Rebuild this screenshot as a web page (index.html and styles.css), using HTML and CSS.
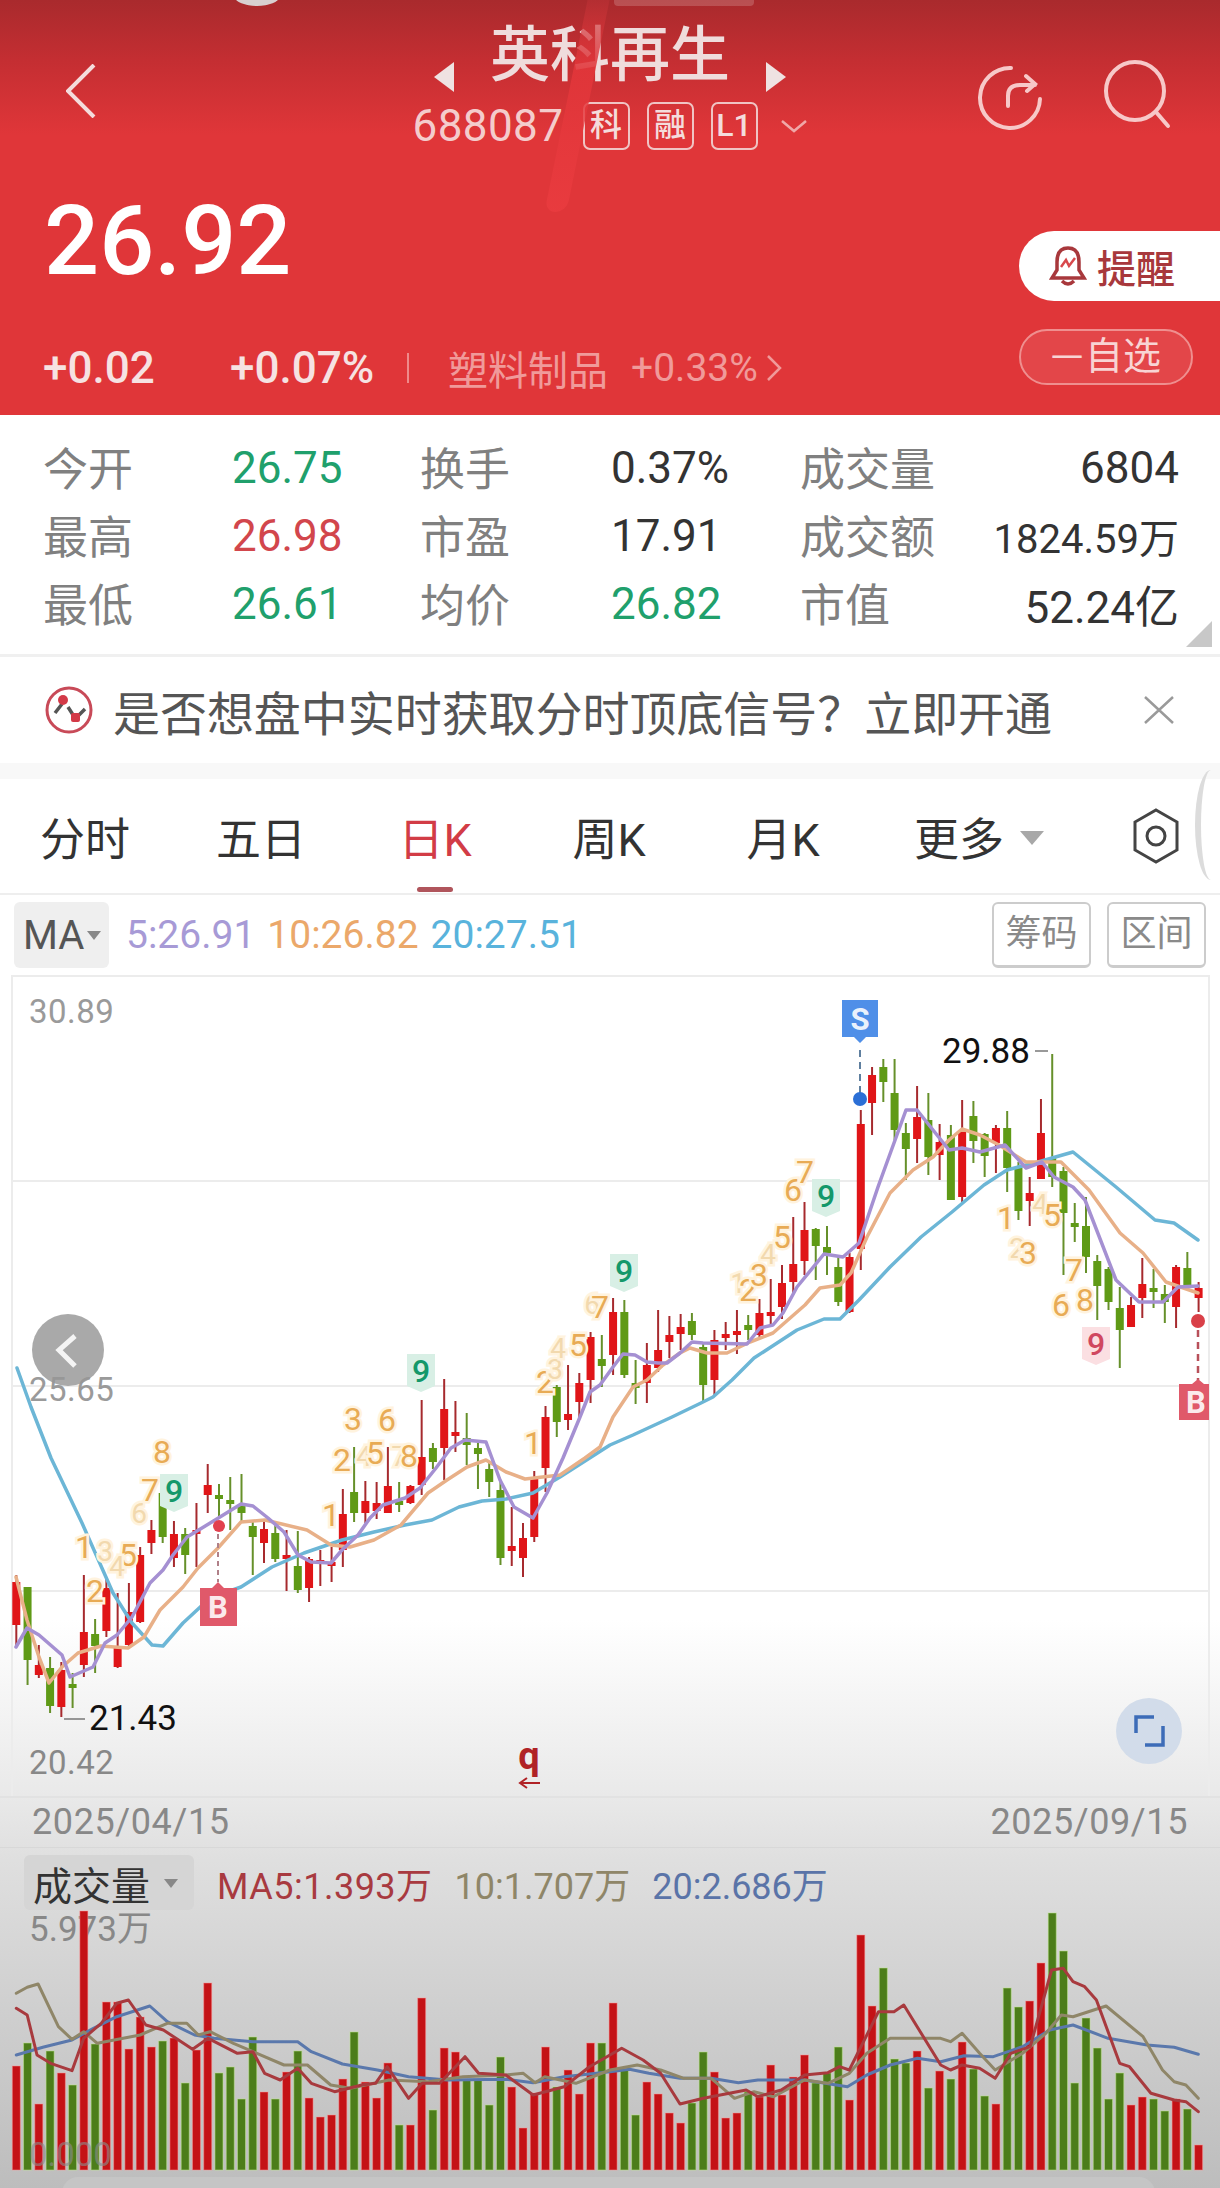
FILE: index.html
```html
<!DOCTYPE html>
<html lang="zh-CN">
<head>
    <meta charset="UTF-8">
    <meta name="viewport" content="width=device-width, initial-scale=1.0">
    <title>英科再生 688087</title>
    <link rel="stylesheet" href="styles.css">
</head>
<body>
    <div class="header">
        <div class="top-mark"></div>
        <div class="top-pill"></div>
        <div class="streak"></div>

        <div class="nav">
            <svg class="back-icon" width="30" height="54" viewBox="0 0 30 54"><path d="M28 1 L2 27 L28 53"/></svg>
            <div class="stock-title">
                <div class="title-row">
                    <span class="arrow-left"></span>
                    <span class="stock-name">英科再生</span>
                    <span class="arrow-right"></span>
                </div>
                <div class="code-row">
                    <span class="stock-code">688087</span>
                    <span class="code-tag">科</span>
                    <span class="code-tag">融</span>
                    <span class="code-tag">L1</span>
                    <svg class="code-chevron" width="28" height="14" viewBox="0 0 28 14"><path d="M2 2 L14 12 L26 2"/></svg>
                </div>
            </div>
            <div class="nav-icons">
                <svg width="80" height="80" viewBox="0 0 80 80"><path d="M41 10 A30 30 0 1 0 70 41"/><path d="M38 48 V38 Q38 27 50 27 H65 M56 18 L65 26 L57 33"/></svg>
                <svg width="80" height="80" viewBox="0 0 80 80"><circle cx="36" cy="33" r="29"/><path d="M57 54 L69 68"/></svg>
            </div>
        </div>

        <div class="quote">
            <div class="quote-left">
                <div class="price">26.92</div>
                <div class="change-row">
                    <span class="change-abs">+0.02</span>
                    <span class="change-pct">+0.07%</span>
                    <span class="change-divider"></span>
                    <span class="sector">塑料制品</span>
                    <span class="sector-pct">+0.33%</span>
                    <svg class="sector-chevron" width="16" height="28" viewBox="0 0 16 28"><path d="M2 2 L14 14 L2 26"/></svg>
                </div>
            </div>
            <div class="quote-right">
                <div class="remind-btn">
                    <svg width="38" height="42" viewBox="0 0 38 42"><path d="M19 3 C10 3 8 10 8 17 V25 L3 33 H35 L30 25 V17 C30 10 28 3 19 3 Z"/><path d="M13 36 Q19 42 25 36"/><path class="bell-mark" d="M12 22 L17 15 L20 21 L26 13"/></svg>
                    <span>提醒</span>
                </div>
                <div class="watch-btn"><span class="watch-minus">一</span>自选</div>
            </div>
        </div>
    </div>

    <div class="stats">
        <span class="stat-label">今开</span><span class="stat-value green">26.75</span>
        <span class="stat-label">换手</span><span class="stat-value">0.37%</span>
        <span class="stat-label">成交量</span><span class="stat-value end">6804</span>
        <span class="stat-label">最高</span><span class="stat-value red">26.98</span>
        <span class="stat-label">市盈</span><span class="stat-value">17.91</span>
        <span class="stat-label">成交额</span><span class="stat-value end small">1824.59万</span>
        <span class="stat-label">最低</span><span class="stat-value green">26.61</span>
        <span class="stat-label">均价</span><span class="stat-value green">26.82</span>
        <span class="stat-label">市值</span><span class="stat-value end">52.24亿</span>
        <div class="stats-corner"></div>
    </div>

    <div class="notice">
        <svg width="48" height="48" viewBox="0 0 48 48"><circle class="notice-ring" cx="24" cy="24" r="22"/><path class="notice-line" d="M10 27 L17 18 M23 21 L30 32 M33 30 L40 23"/><circle class="notice-dot" cx="18" cy="14" r="5"/><rect class="notice-dot" x="26" y="27" width="9" height="9" rx="2"/></svg>
        <span class="notice-text">是否想盘中实时获取分时顶底信号？立即开通</span>
        <svg class="notice-close" width="32" height="28" viewBox="0 0 32 28"><path d="M2 1 L30 27 M30 1 L2 27"/></svg>
    </div>
    <div class="strip"></div>

    <div class="tabs">
        <div class="tab">分时</div>
        <div class="tab">五日</div>
        <div class="tab active">日K</div>
        <div class="tab">周K</div>
        <div class="tab">月K</div>
        <div class="tab tab-more">更多<span class="tab-caret"></span></div>
        <svg class="tab-settings" width="50" height="58" viewBox="0 0 50 58"><path d="M25 3 L46 15 V43 L25 55 L4 43 V15 Z"/><circle cx="25" cy="29" r="9"/></svg>
        <div class="edge-pill"></div>
    </div>

    <div class="ma-row">
        <div class="ma-btn">MA<span class="ma-caret"></span></div>
        <span class="ma-value ma5">5:26.91</span>
        <span class="ma-value ma10">10:26.82</span>
        <span class="ma-value ma20">20:27.51</span>
        <div class="ma-actions">
            <div class="ma-action">筹码</div>
            <div class="ma-action">区间</div>
        </div>
    </div>

    <svg id="price-chart" class="price-chart" width="1220" height="821" viewBox="0 975 1220 821"></svg>

    <div class="dates">
        <span>2025/04/15</span>
        <span>2025/09/15</span>
    </div>

    <div class="vol-head">
        <div class="vol-btn">成交量<span class="vol-caret"></span></div>
        <span class="vol-ma vol5">MA5:1.393万</span>
        <span class="vol-ma vol10">10:1.707万</span>
        <span class="vol-ma vol20">20:2.686万</span>
    </div>

    <svg id="vol-chart" class="vol-chart" width="1220" height="262" viewBox="0 1910 1220 262"></svg>

    <div class="bottom-bar"></div>

    <script src="chart.js"></script>
</body>
</html>
```

FILE: styles.css
```css
* {
    margin: 0;
    padding: 0;
    box-sizing: border-box;
}

body {
    width: 1220px;
    height: 2188px;
    overflow: hidden;
    font-family: 'Roboto', 'Noto Sans CJK SC', sans-serif;
    color: #333;
    background: linear-gradient(to bottom, #fff 0, #fff 1620px, #e9e9e9 1796px, #dfdfdf 1860px, #d0d0d0 2000px, #bdbdbd 2188px);
}

svg {
    display: block;
    flex: none;
}

/* red quote header */
.header {
    position: relative;
    height: 415px;
    padding-top: 24px;
    background: linear-gradient(to bottom, #a92a2d 0, #c42e32 60px, #e03639 135px, #e03639 100%);
    color: #f3dede;
    box-shadow: 0 3px 0 #d8d8d8;
}

.top-mark {
    position: absolute;
    left: 235px;
    top: -12px;
    width: 44px;
    height: 18px;
    border-radius: 50%;
    background: #d8d0d0;
}

.top-pill {
    position: absolute;
    left: 614px;
    top: 0;
    width: 140px;
    height: 6px;
    border-radius: 0 0 4px 4px;
    background: rgba(255, 255, 255, 0.18);
}

.streak {
    position: absolute;
    left: 566px;
    top: 0;
    width: 22px;
    height: 212px;
    border-radius: 0 0 12px 12px;
    transform: skewX(-11.5deg);
    background: linear-gradient(to bottom, rgba(190, 50, 54, 0.5), rgba(226, 54, 58, 0.9) 70px, rgba(238, 62, 66, 0.6));
    z-index: 2;
}

.nav {
    display: grid;
    grid-template-columns: 1fr auto 1fr;
    align-items: center;
}

.back-icon {
    margin-left: 66px;
    margin-top: 8px;
}

.back-icon path {
    fill: none;
    stroke: #f4dcdc;
    stroke-width: 4;
}

.stock-title {
    display: flex;
    flex-direction: column;
    align-items: center;
}

.title-row {
    display: flex;
    align-items: center;
    gap: 36px;
    height: 64px;
}

.stock-name {
    font-size: 60px;
    line-height: 64px;
    font-weight: 500;
    color: #efdcdc;
}

.arrow-left,
.arrow-right {
    width: 0;
    height: 0;
    margin-top: 42px;
    border-top: 15px solid transparent;
    border-bottom: 15px solid transparent;
}

.arrow-left {
    border-right: 20px solid #efe2e2;
}

.arrow-right {
    border-left: 20px solid #efe2e2;
}

.code-row {
    display: flex;
    align-items: center;
    height: 48px;
    margin-top: 14px;
    color: #f4cccc;
}

.stock-code {
    width: 170px;
    font-size: 44px;
    letter-spacing: 0.4px;
}

.code-tag {
    width: 47px;
    height: 48px;
    margin-right: 17px;
    border: 2px solid #f0c4c4;
    border-radius: 7px;
    font-size: 32px;
    font-weight: 500;
    line-height: 42px;
    text-align: center;
    color: #f4dcdc;
}

.code-chevron {
    margin-left: 5px;
}

.code-chevron path {
    fill: none;
    stroke: #f0a8a8;
    stroke-width: 2.5;
}

.nav-icons {
    display: flex;
    justify-content: flex-end;
    gap: 49px;
    padding-right: 41px;
    padding-top: 22px;
}

.nav-icons svg path,
.nav-icons svg circle {
    fill: none;
    stroke: #f7c8c8;
    stroke-width: 4;
    stroke-linecap: round;
}

.quote {
    display: flex;
    justify-content: space-between;
    margin-top: 41px;
    padding-left: 43px;
}

.price {
    margin-left: 1px;
    font-size: 97px;
    line-height: 100px;
    font-weight: 500;
    color: #fff;
}

.change-row {
    display: flex;
    align-items: center;
    height: 50px;
    margin-top: 52px;
}

.change-abs {
    width: 187px;
    font-size: 44px;
    font-weight: 500;
    color: #f6e2e2;
}

.change-pct {
    font-size: 44px;
    font-weight: 500;
    color: #f6e2e2;
}

.change-divider {
    width: 2px;
    height: 30px;
    margin: 0 39px 0 33px;
    background: #ef8a8a;
}

.sector {
    font-size: 40px;
    color: #f09a9a;
}

.sector-pct {
    margin-left: 23px;
    font-size: 39px;
    color: #f09a9a;
}

.sector-chevron {
    margin-left: 8px;
}

.sector-chevron path {
    fill: none;
    stroke: #f09a9a;
    stroke-width: 2.5;
}

.quote-right {
    display: flex;
    flex-direction: column;
    align-items: flex-end;
    padding-top: 40px;
}

.remind-btn {
    display: flex;
    align-items: center;
    gap: 10px;
    width: 201px;
    height: 70px;
    padding-left: 30px;
    border-radius: 35px 0 0 35px;
    background: #fff;
    font-size: 39px;
    font-weight: 500;
    color: #a8383c;
}

.remind-btn svg path {
    fill: none;
    stroke: #a8383c;
    stroke-width: 3.5;
}

.remind-btn svg .bell-mark {
    stroke: #d8484c;
    stroke-width: 2.5;
}

.watch-btn {
    width: 174px;
    height: 56px;
    margin-top: 28px;
    margin-right: 27px;
    border: 2px solid #ef8f8f;
    border-radius: 28px;
    background: #e34649;
    font-size: 38px;
    line-height: 50px;
    color: #f8d4d4;
    text-align: center;
}

.watch-minus {
    font-size: 32px;
    margin-right: 2px;
}

/* stats table */
.stats {
    position: relative;
    display: grid;
    grid-template-columns: 189px 188px 191px 189px 146px 233px;
    grid-auto-rows: 68px;
    align-items: center;
    height: 242px;
    padding: 17px 0 0 43px;
    border-bottom: 3px solid #f0f0f0;
    background: #fff;
}

.stat-label {
    font-size: 45px;
    color: #808080;
    white-space: nowrap;
}

.stat-value {
    padding-top: 3px;
    font-size: 44px;
    color: #333;
}

.stat-value.green {
    color: #20a06c;
}

.stat-value.red {
    color: #d2464c;
}

.stat-value.end {
    text-align: right;
    white-space: nowrap;
}

.stat-value.small {
    font-size: 40px;
}

.stats-corner {
    position: absolute;
    right: 8px;
    bottom: 7px;
    width: 26px;
    height: 26px;
    background: #c8c8c8;
    clip-path: polygon(100% 0, 100% 100%, 0 100%);
}

/* signal notice */
.notice {
    display: flex;
    align-items: center;
    height: 106px;
    padding: 0 45px;
    background: #fff;
}

.notice-ring {
    fill: none;
    stroke: #c84a58;
    stroke-width: 3;
}

.notice-line {
    fill: none;
    stroke: #555;
    stroke-width: 3.5;
}

.notice-dot {
    fill: #d33a48;
}

.notice-text {
    margin-left: 20px;
    font-size: 47px;
    color: #555;
    white-space: nowrap;
    letter-spacing: -0.05px;
}

.notice-close {
    margin-left: auto;
}

.notice-close path {
    fill: none;
    stroke: #9a9a9a;
    stroke-width: 2.5;
}

.strip {
    height: 16px;
    background: #f8f8f8;
}

/* period tabs */
.tabs {
    position: relative;
    display: flex;
    align-items: center;
    height: 116px;
    border-bottom: 2px solid #eee;
    background: #fff;
}

.tab {
    position: relative;
    display: flex;
    align-items: center;
    justify-content: center;
    width: 174px;
    height: 100%;
    font-size: 45px;
    color: #333;
}

.tab:first-child {
    padding-right: 4px;
}

.tab.active {
    color: #d23c46;
}

.tab.active::after {
    content: '';
    position: absolute;
    left: 69px;
    bottom: 1px;
    width: 36px;
    height: 5px;
    border-radius: 3px;
    background: #b0555c;
}

.tab-more {
    justify-content: flex-start;
    padding-left: 44px;
}

.tab-caret {
    width: 0;
    height: 0;
    margin: 4px 0 0 16px;
    border-left: 12px solid transparent;
    border-right: 12px solid transparent;
    border-top: 14px solid #a8a8a8;
}

.tab-settings {
    margin-left: 87px;
}

.tab-settings path,
.tab-settings circle {
    fill: none;
    stroke: #444;
    stroke-width: 3;
}

.edge-pill {
    position: absolute;
    right: 9px;
    top: -9px;
    width: 16px;
    height: 110px;
    border-left: 6px solid #dcdcdc;
    border-radius: 16px 0 0 16px / 55px 0 0 55px;
}

/* MA legend */
.ma-row {
    display: flex;
    align-items: center;
    gap: 12px;
    height: 80px;
    padding: 0 14px;
    background: #fff;
}

.ma-btn {
    display: flex;
    align-items: center;
    width: 95px;
    height: 66px;
    margin-right: 5px;
    padding-left: 9px;
    border-radius: 6px;
    background: #efefef;
    font-size: 40px;
    color: #555;
}

.ma-caret {
    width: 0;
    height: 0;
    margin-left: 3px;
    border-left: 7px solid transparent;
    border-right: 7px solid transparent;
    border-top: 9px solid #888;
}

.ma-value {
    font-size: 39px;
}

.ma5 {
    color: #a79ad6;
}

.ma10 {
    color: #eba86a;
}

.ma20 {
    color: #59b3dc;
}

.ma-actions {
    display: flex;
    gap: 16px;
    margin-left: auto;
}

.ma-action {
    width: 99px;
    height: 66px;
    border: 2px solid #ccc;
    border-bottom-width: 3px;
    border-radius: 6px;
    background: #fff;
    font-size: 36px;
    line-height: 60px;
    text-align: center;
    color: #8a8a8a;
}

/* charts */
.chart-line {
    stroke: #ececec;
    stroke-width: 2;
}

.axis-label {
    font-size: 33px;
    fill: #9a9a9a;
    letter-spacing: 0.5px;
}

.axis-label.dim {
    fill: #888;
}

.peak-label {
    font-size: 35px;
    fill: #111;
}

.peak-dash {
    stroke: #777;
    stroke-width: 1.5;
}

.seq {
    font-size: 32px;
    fill: #e8ab55;
    stroke: #fff3de;
    stroke-width: 5;
    paint-order: stroke;
    text-anchor: middle;
}

.seq.faded {
    fill: #f2d9ae;
    font-size: 28px;
}

.seq-nine {
    font-size: 32px;
    font-weight: 500;
    text-anchor: middle;
}

.signal-text {
    font-size: 31px;
    font-weight: 700;
    fill: #fff;
    fill-opacity: 0.9;
    text-anchor: middle;
}

.buy-mark {
    font-size: 38px;
    font-weight: 700;
    fill: #b02226;
    text-anchor: middle;
}

.dates {
    display: flex;
    justify-content: space-between;
    height: 52px;
    padding: 0 32px;
    border-top: 2px solid #e2e2e2;
    border-bottom: 1px solid #d8d8d8;
    font-size: 36px;
    line-height: 48px;
    letter-spacing: 0.6px;
    color: #888;
}

.vol-head {
    display: flex;
    align-items: center;
    gap: 22px;
    height: 62px;
    padding: 7px 0 0 24px;
}

.vol-btn {
    display: flex;
    align-items: center;
    width: 170px;
    height: 55px;
    margin-right: 1px;
    padding-left: 9px;
    border-radius: 6px;
    background: #d5d5d5;
    font-size: 39px;
    color: #333;
}

.vol-caret {
    width: 0;
    height: 0;
    margin: 2px 0 0 14px;
    border-left: 7px solid transparent;
    border-right: 7px solid transparent;
    border-top: 9px solid #888;
}

.vol-ma {
    font-size: 36px;
}

.vol5 {
    color: #a83a40;
    letter-spacing: 0.5px;
}

.vol10 {
    color: #8f8668;
}

.vol20 {
    color: #5a74a8;
}

.vol-label {
    font-size: 35px;
    fill: #888;
}

.vol-zero {
    font-size: 33px;
    fill: #8a8a8a;
    fill-opacity: 0.65;
}

.bottom-bar {
    height: 16px;
    margin: 5px 65px 0 62px;
    border-radius: 16px 16px 0 0;
    background: rgba(255, 255, 255, 0.12);
}
```

FILE: chart.js
```javascript
const SVG_NS = 'http://www.w3.org/2000/svg';

// Candle and bar slots
const SLOT_START = 16.3;
const SLOT_STEP = 11.26;
const slotX = i => SLOT_START + SLOT_STEP * i;

// type, high, body top, body bottom, low (page pixels)
const candles = [
    ['r',1575,1582,1625,1647],['g',1587,1587,1660,1685],['r',1645,1665,1675,1678],['g',1657,1668,1706,1713],
    ['r',1662,1670,1707,1717],['g',1673,1684,1686,1708],['r',1575,1632,1665,1677],['g',1619,1634,1646,1673],
    ['r',1577,1588,1631,1637],['r',1593,1648,1667,1668],['r',1583,1612,1645,1647],['r',1547,1555,1622,1623],
    ['r',1520,1530,1543,1554],['g',1480,1493,1537,1543],['r',1521,1534,1558,1567],['g',1528,1534,1555,1574],
    ['r',1503,1530,1533,1567],['r',1464,1485,1495,1513],['g',1484,1495,1497,1517],['g',1477,1500,1503,1530],
    ['g',1474,1505,1513,1522],['g',1522,1526,1537,1575],['r',1520,1529,1543,1563],['g',1523,1533,1559,1562],
    ['r',1530,1555,1557,1591],['g',1531,1566,1590,1593],['r',1557,1559,1588,1602],['r',1550,1560,1563,1586],
    ['r',1547,1562,1564,1582],['r',1489,1514,1550,1567],['g',1447,1492,1513,1522],['r',1481,1501,1513,1523],
    ['r',1482,1503,1511,1519],['r',1447,1486,1513,1513],['g',1482,1501,1503,1512],['r',1485,1486,1503,1504],
    ['r',1400,1457,1485,1495],['g',1443,1448,1462,1469],['r',1379,1409,1448,1480],['r',1401,1432,1435,1452],
    ['g',1413,1438,1445,1465],['g',1443,1448,1454,1489],['g',1462,1469,1482,1497],['g',1480,1490,1558,1565],
    ['r',1507,1546,1551,1566],['r',1523,1538,1558,1577],['r',1471,1477,1537,1542],['r',1406,1417,1468,1492],
    ['g',1385,1387,1422,1437],['r',1365,1414,1420,1430],['r',1373,1383,1402,1417],['r',1332,1337,1380,1403],
    ['g',1335,1359,1366,1387],['r',1298,1312,1355,1375],['g',1300,1312,1375,1378],['g',1360,1383,1388,1404],
    ['r',1343,1365,1383,1403],['r',1310,1350,1368,1372],['r',1316,1335,1342,1358],['r',1314,1327,1334,1350],
    ['g',1313,1321,1335,1340],['g',1342,1347,1385,1402],['r',1330,1340,1380,1395],['r',1322,1334,1338,1350],
    ['r',1310,1331,1333,1354],['g',1315,1325,1330,1340],['r',1299,1313,1335,1339],['r',1279,1312,1315,1326],
    ['r',1265,1283,1307,1319],['r',1217,1264,1282,1293],['r',1202,1230,1261,1275],['g',1228,1229,1246,1280],
    ['g',1226,1247,1253,1275],['g',1257,1267,1302,1306],['r',1253,1257,1312,1313],['r',1110,1124,1249,1270],
    ['r',1067,1075,1103,1135],['g',1059,1067,1082,1102],['g',1059,1093,1130,1140],['g',1123,1133,1149,1180],
    ['r',1086,1117,1139,1163],['g',1093,1120,1157,1175],['r',1124,1142,1155,1180],['g',1125,1135,1200,1200],
    ['r',1100,1132,1197,1202],['g',1101,1116,1141,1163],['g',1133,1134,1156,1177],['r',1125,1128,1143,1173],
    ['g',1111,1128,1168,1192],['g',1162,1168,1211,1220],['r',1177,1193,1201,1226],['r',1099,1133,1179,1179],
    ['g',1054,1158,1177,1187],['g',1167,1171,1213,1275],['g',1203,1223,1225,1242],['g',1197,1226,1257,1273],
    ['g',1255,1261,1286,1320],['g',1267,1269,1302,1310],['g',1287,1308,1330,1368],['r',1297,1305,1327,1327],
    ['r',1258,1284,1298,1318],['g',1269,1288,1291,1308],['g',1285,1294,1302,1323],['r',1265,1267,1307,1328],
    ['g',1252,1268,1285,1290],['r',1282,1288,1298,1312]
];

const ma5 = [[16,1647],[27,1628],[39,1635],[62,1655],[70,1677],[93,1667],[105,1643],[117,1635],[132,1617],[150,1583],
    [163,1570],[173,1555],[187,1537],[202,1528],[220,1517],[241,1504],[253,1506],[268,1518],[284,1532],[298,1555],
    [311,1562],[331,1563],[342,1550],[358,1535],[370,1518],[383,1505],[405,1498],[420,1488],[436,1468],[451,1448],
    [465,1440],[486,1442],[500,1480],[514,1507],[533,1518],[547,1493],[563,1458],[580,1417],[590,1392],[600,1385],
    [613,1367],[623,1354],[635,1355],[647,1362],[658,1363],[667,1363],[680,1353],[692,1342],[703,1343],[747,1344],
    [760,1328],[773,1325],[783,1313],[797,1287],[824,1254],[843,1257],[859,1243],[878,1187],[906,1110],[917,1110],
    [933,1130],[949,1150],[962,1148],[980,1152],[1005,1145],[1026,1168],[1042,1162],[1054,1177],[1073,1187],[1085,1200],
    [1116,1280],[1139,1302],[1163,1302],[1178,1287],[1198,1286]];

const ma10 = [[16,1577],[27,1620],[39,1657],[49,1683],[62,1667],[78,1653],[101,1646],[128,1648],[144,1637],[160,1610],
    [183,1587],[198,1568],[218,1548],[241,1522],[265,1520],[307,1530],[331,1545],[350,1547],[374,1540],[401,1525],
    [428,1493],[447,1480],[467,1467],[486,1460],[506,1472],[525,1479],[560,1475],[585,1458],[600,1447],[613,1417],
    [633,1387],[647,1380],[663,1365],[680,1353],[690,1348],[707,1353],[727,1353],[750,1342],[773,1333],[805,1305],
    [820,1288],[840,1285],[851,1273],[867,1237],[890,1193],[913,1170],[933,1157],[949,1140],[962,1129],[980,1135],
    [999,1145],[1026,1162],[1061,1162],[1089,1190],[1120,1233],[1143,1253],[1166,1282],[1198,1293]];

const ma20 = [[17,1368],[31,1407],[51,1458],[82,1523],[113,1593],[132,1623],[152,1645],[163,1646],[183,1623],[210,1598],
    [241,1587],[272,1567],[304,1553],[342,1540],[374,1532],[405,1525],[432,1520],[459,1507],[482,1501],[506,1499],
    [533,1493],[560,1477],[610,1445],[633,1435],[672,1417],[701,1403],[713,1397],[732,1380],[754,1358],[797,1330],
    [824,1319],[840,1319],[859,1300],[890,1267],[921,1237],[952,1212],[984,1185],[1007,1170],[1038,1162],[1073,1152],
    [1116,1187],[1155,1220],[1174,1223],[1198,1240]];

// TD sequence digits: text, x, y, faded
const seqDigits = [
    ['8',162,1452],['7',150,1490],['6',139,1512,1],['1',84,1547],['3',105,1550,1],['5',128,1555],['4',117,1565,1],['2',95,1591],
    ['3',353,1419],['6',387,1420],['2',342,1460],['4',364,1455,1],['5',375,1453],['7',399,1455,1],['8',409,1456],['1',331,1515],
    ['1',533,1443],['2',545,1382],['3',555,1368,1],['4',558,1347,1],['5',578,1345],['6',592,1303,1],['7',600,1307],
    ['1',738,1282,1],['2',748,1290],['3',759,1275],['4',768,1253,1],['5',782,1237],['6',793,1190],['7',805,1172],
    ['1',1006,1218],['2',1017,1247,1],['3',1028,1253],['4',1040,1203,1],['5',1052,1215],['7',1074,1270],['6',1061,1305],['8',1085,1300]
];

// Finished nines sit on a small tag
const nineTags = [
    [174,1492,'#d8efe5','#14986a'],[421,1372,'#d8efe5','#14986a'],[624,1272,'#d8efe5','#14986a'],
    [826,1197,'#d8efe5','#14986a'],[1096,1345,'#fbdfe2','#d04860']
];

// type and bar top (page pixels), bars stand on y=2170
const volBars = 'r2066 g2043 r2104 g2051 r2073 g2085 r1911 g2044 r2002 r2002 r2049 r2017 r2047 g2041 r2038 g2083 r2050 r1983 g2073 g2067 g2099 g2037 r2092 g2099 r2072 g2051 r2098 r2117 r2115 r2079 g2032 r2082 r2098 r2063 g2125 r2125 r1998 g2110 r2048 r2052 g2080 g2080 g2105 g2057 r2087 r2128 r2093 r2047 g2087 r2070 r2094 r2043 g2043 r2003 g2070 g2115 r2082 r2094 r2113 r2123 g2103 g2052 r2072 r2118 r2113 g2092 r2097 r2065 r2095 r2077 r2055 g2083 g2073 g2047 r2100 r1935 r2006 g1968 g2059 g2063 r2051 g2088 r2071 g2079 r2042 g2069 g2096 r2104 g1988 g2007 r2001 r1963 g1913 g1951 g2083 g2018 g2048 g2099 g2073 r2105 r2097 g2099 g2111 r2099 g2109 r2145'
    .split(' ').map(b => [b[0], Number(b.slice(1))]);

// Volume averages, read as [x, y] relative to two half-chart panels
const leftPanel = pts => pts.map(([x, y]) => [x / 2.57, 1790 + y / 3]);
const rightPanel = pts => pts.map(([x, y]) => [610 + x / 2.57, 1790 + y / 3]);

const volMa5 = leftPanel([[42,655],[70,675],[95,795],[130,820],[185,842],[215,745],[260,700],[300,640],[330,630],[375,705],[420,720],[495,778],[535,745],[610,790],[650,785],[680,850],[720,870],[765,835],[800,880],[860,905],[930,885],[965,880],[995,830],[1050,925],[1085,880],[1130,880],[1195,800],[1230,850],[1300,855],[1370,915],[1450,890],[1515,830]])
    .concat(rightPanel([[30,775],[85,810],[130,850],[180,942],[240,925],[350,900],[380,920],[440,900],[500,855],[560,848],[590,830],[615,840],[690,665],[730,665],[755,645],[850,825],[875,840],[905,825],[950,835],[990,865],[1030,790],[1080,770],[1135,540],[1165,535],[1190,575],[1220,590],[1250,630],[1310,820],[1335,830],[1390,910],[1450,930],[1480,935],[1512,965]]));

const volMa10 = leftPanel([[42,610],[70,592],[98,582],[150,710],[185,748],[215,725],[250,760],[360,735],[430,700],[480,700],[510,735],[540,725],[600,760],[650,785],[730,825],[790,825],[850,885],[900,895],[1000,870],[1100,875],[1190,860],[1300,855],[1345,850],[1375,878],[1400,860],[1480,880]])
    .concat(rightPanel([[0,840],[70,825],[130,840],[190,865],[260,865],[320,925],[370,905],[420,920],[500,870],[560,880],[615,850],[660,790],[720,745],[850,745],[875,755],[905,730],[950,790],[990,840],[1060,790],[1120,730],[1160,675],[1190,680],[1275,648],[1370,740],[1420,840],[1450,875],[1480,885],[1512,925]]));

const volMa20 = leftPanel([[42,795],[110,772],[185,750],[240,715],[300,680],[385,648],[430,695],[500,735],[550,745],[650,755],[765,755],[800,785],[880,822],[970,840],[1050,860],[1150,870],[1300,868],[1370,878],[1450,860]])
    .concat(rightPanel([[0,845],[50,838],[100,850],[180,865],[260,865],[330,878],[380,870],[500,870],[610,890],[660,855],[720,825],[790,805],[850,815],[910,797],[985,800],[1060,770],[1130,720],[1190,705],[1280,745],[1380,765],[1450,772],[1512,793]]));

function add(parent, tag, attrs, text) {
    const el = document.createElementNS(SVG_NS, tag);
    Object.keys(attrs).forEach(key => el.setAttribute(key, attrs[key]));
    if (text) el.textContent = text;
    parent.appendChild(el);
    return el;
}

function addLine(parent, pts, color, width) {
    add(parent, 'polyline', {
        points: pts.map(p => `${p[0].toFixed(1)},${p[1].toFixed(1)}`).join(' '),
        fill: 'none',
        stroke: color,
        'stroke-width': width,
        'stroke-linejoin': 'round',
        'stroke-linecap': 'round'
    });
}

function drawPriceChart() {
    const svg = document.getElementById('price-chart');

    // Grid
    [976, 1181, 1386, 1591].forEach(y => {
        add(svg, 'line', { class: 'chart-line', x1: 12, x2: 1209, y1: y, y2: y });
    });
    add(svg, 'line', { class: 'chart-line', x1: 12, x2: 12, y1: 975, y2: 1796 });
    add(svg, 'line', { class: 'chart-line', x1: 1209, x2: 1209, y1: 975, y2: 1796 });

    add(svg, 'text', { class: 'axis-label', x: 29, y: 1023 }, '30.89');
    add(svg, 'text', { class: 'axis-label', x: 29, y: 1401 }, '25.65');
    add(svg, 'text', { class: 'axis-label dim', x: 29, y: 1774 }, '20.42');

    // Candles
    candles.forEach((c, i) => {
        const x = slotX(i);
        const isUp = c[0] === 'r';
        add(svg, 'line', { x1: x, x2: x, y1: c[1], y2: c[4], stroke: isUp ? '#a62a2e' : '#66902a', 'stroke-width': 2 });
        add(svg, 'rect', { x: x - 4, y: c[2], width: 8, height: Math.max(c[3] - c[2], 4), fill: isUp ? '#e01518' : '#5f9a16' });
    });

    addLine(svg, ma20, '#6cb6d6', 3.5);
    addLine(svg, ma10, '#e8b088', 3.5);
    addLine(svg, ma5, '#a590d2', 3.5);

    // Sequence digits
    seqDigits.forEach(d => {
        add(svg, 'text', { class: d[3] ? 'seq faded' : 'seq', x: d[1], y: d[2] + 11 }, d[0]);
    });
    nineTags.forEach(t => {
        add(svg, 'path', { d: `M${t[0] - 14} ${t[1] - 18} h28 v32 l-14 6 l-14 -6 Z`, fill: t[2] });
        add(svg, 'text', { class: 'seq-nine', x: t[0], y: t[1] + 10, fill: t[3] }, '9');
    });

    // Sell signal
    add(svg, 'path', { d: 'M842 1000 h36 v37 h-12 l-6 6 l-6 -6 h-12 Z', fill: '#4f8fe8' });
    add(svg, 'text', { class: 'signal-text', x: 860, y: 1030 }, 'S');
    add(svg, 'line', { x1: 860, x2: 860, y1: 1050, y2: 1094, stroke: '#5f7f9f', 'stroke-width': 2, 'stroke-dasharray': '7 5' });
    add(svg, 'circle', { cx: 860, cy: 1099, r: 7, fill: '#2b6fd6' });

    // Buy signals
    add(svg, 'line', { x1: 218, x2: 218, y1: 1534, y2: 1582, stroke: '#b08088', 'stroke-width': 2, 'stroke-dasharray': '5 4' });
    add(svg, 'circle', { cx: 219, cy: 1526, r: 6, fill: '#e2404e' });
    add(svg, 'path', { d: 'M200 1626 v-38 h12 l6 -6 l6 6 h13 v38 Z', fill: '#e0596a' });
    add(svg, 'text', { class: 'signal-text', x: 218, y: 1618 }, 'B');

    add(svg, 'line', { x1: 1198, x2: 1198, y1: 1330, y2: 1380, stroke: '#b8505a', 'stroke-width': 2.5, 'stroke-dasharray': '7 5' });
    add(svg, 'circle', { cx: 1198, cy: 1321, r: 7, fill: '#d94048' });
    add(svg, 'path', { d: 'M1179 1420 v-36 h13 l6 -5 l6 5 h5 v36 Z', fill: '#e0596a' });
    add(svg, 'text', { class: 'signal-text', x: 1196, y: 1413 }, 'B');

    // Period high and low
    add(svg, 'text', { class: 'peak-label', x: 942, y: 1063 }, '29.88');
    add(svg, 'line', { class: 'peak-dash', x1: 1035, x2: 1048, y1: 1051, y2: 1051 });
    add(svg, 'text', { class: 'peak-label', x: 89, y: 1730 }, '21.43');
    add(svg, 'line', { class: 'peak-dash', x1: 64, x2: 85, y1: 1719, y2: 1719 });

    // Reversed marker
    add(svg, 'text', { class: 'buy-mark', x: 529, y: 1769 }, 'q');
    add(svg, 'path', { d: 'M540 1783 H521 M527 1778 L520 1783 L527 1788', fill: 'none', stroke: '#b02226', 'stroke-width': 2 });

    // Page back button
    add(svg, 'circle', { cx: 68, cy: 1350, r: 36, fill: 'rgba(150,150,150,0.82)' });
    add(svg, 'path', { d: 'M75 1336 L59 1350 L75 1366', fill: 'none', stroke: '#f4f4f4', 'stroke-width': 5 });

    // Full screen button
    add(svg, 'circle', { cx: 1149, cy: 1731, r: 33, fill: '#d2dcea' });
    add(svg, 'path', { d: 'M1136 1733 V1717 H1154 M1163 1726 V1745 H1145', fill: 'none', stroke: '#3d6cb8', 'stroke-width': 3.5 });
}

function drawVolumeChart() {
    const svg = document.getElementById('vol-chart');

    add(svg, 'text', { class: 'vol-label', x: 29, y: 1941 }, '5.973万');

    volBars.forEach((b, i) => {
        const isUp = b[0] === 'r';
        add(svg, 'rect', {
            x: slotX(i) - 4,
            y: b[1],
            width: 8,
            height: 2170 - b[1],
            fill: isUp ? '#c41216' : '#4c7d1a',
            stroke: isUp ? 'rgba(255,150,150,0.5)' : 'rgba(190,230,140,0.55)',
            'stroke-width': 1
        });
    });

    addLine(svg, volMa20, '#5a78ac', 3);
    addLine(svg, volMa10, '#8f8668', 3);
    addLine(svg, volMa5, '#a83a3e', 3);

    add(svg, 'text', { class: 'vol-zero', x: 29, y: 2166 }, '0.000');
}

window.addEventListener('load', function() {
    drawPriceChart();
    drawVolumeChart();
});
```
